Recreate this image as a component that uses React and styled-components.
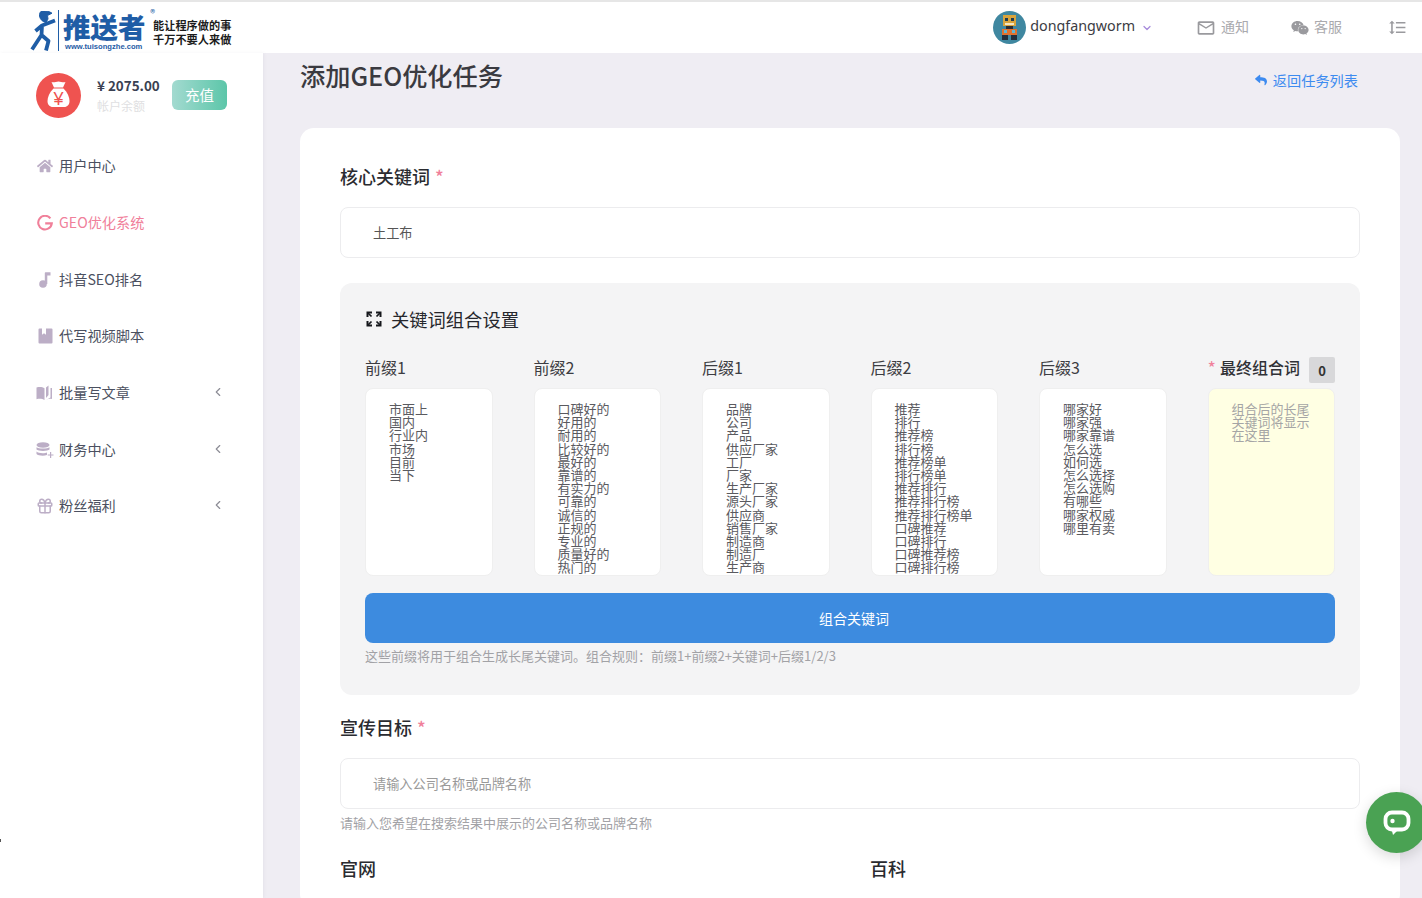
import React from "react";
import styled, { createGlobalStyle } from "styled-components";
import { ChevronLeft, ChevronDown, Gift } from "lucide-react";
import { FaHome, FaReply, FaWeixin } from "react-icons/fa";
import { MdFormatLineSpacing, MdMailOutline } from "react-icons/md";

const GlobalStyle = createGlobalStyle`
  html, body {
    margin: 0;
    height: 100%;
    overflow: hidden;
    background: #efedf3;
    font-family: "Noto Sans CJK SC", "Noto Sans", sans-serif;
  }
  * { box-sizing: border-box; }
`;

const columns = [
  { title: "前缀1", words: ["市面上", "国内", "行业内", "市场", "目前", "当下"] },
  { title: "前缀2", words: ["口碑好的", "好用的", "耐用的", "比较好的", "最好的", "靠谱的", "有实力的", "可靠的", "诚信的", "正规的", "专业的", "质量好的", "热门的", "知名的"] },
  { title: "后缀1", words: ["品牌", "公司", "产品", "供应厂家", "工厂", "厂家", "生产厂家", "源头厂家", "供应商", "销售厂家", "制造商", "制造厂", "生产商", "批发商"] },
  { title: "后缀2", words: ["推荐", "排行", "推荐榜", "排行榜", "推荐榜单", "排行榜单", "推荐排行", "推荐排行榜", "推荐排行榜单", "口碑推荐", "口碑排行", "口碑推荐榜", "口碑排行榜", "口碑排行榜单"] },
  { title: "后缀3", words: ["哪家好", "哪家强", "哪家靠谱", "怎么选", "如何选", "怎么选择", "怎么选购", "有哪些", "哪家权威", "哪里有卖"] },
];

const DatabaseIcon = () => (
  <svg width="18" height="16" viewBox="0 0 18 16" fill="currentColor">
    <ellipse cx="7" cy="3" rx="6.5" ry="2.8" />
    <path d="M.5 5.2C2 7 12 7 13.5 5.2V7.6C12 9.4 2 9.4.5 7.6z" />
    <path d="M.5 9.6C2 11.4 9 11.6 11 10.4V13C8 14.2 2 13.8.5 12z" />
    <path d="M14 10h1.2v2.4h2.3v1.2h-2.3V16H14v-2.4h-2.3v-1.2H14z" />
  </svg>
);

const GoogleIcon = () => (
  <svg width="16" height="16" viewBox="0 0 16 16" fill="none" stroke="currentColor" strokeWidth="2.1">
    <path d="M13.4 3.4A6.8 6.8 0 1 0 14.8 8.4H8.2" />
  </svg>
);

const NoteIcon = () => (
  <svg width="15" height="16" viewBox="0 0 15 16" fill="currentColor">
    <circle cx="5" cy="12" r="3.800" />
    <path d="M6.800 12V1.200c0-.6.4-1 1-1h4.700v3.300H9.300V12z" />
  </svg>
);

const BookIcon = () => (
  <svg width="15" height="16" viewBox="0 0 15 16" fill="currentColor">
    <path d="M1.500.5H4v6.200l2-1.500 2 1.500V.5h5.500a1 1 0 0 1 1 1V14.500a1 1 0 0 1-1 1h-12a1 1 0 0 1-1-1V1.500a1 1 0 0 1 1-1z" />
  </svg>
);

const OpenBookIcon = () => (
  <svg width="18" height="16" viewBox="0 0 18 16" fill="currentColor">
    <path d="M.5 2.500c3-.8 6-.6 8 .8V15c-2-1.200-5-1.400-8-.8z" />
    <path d="M10 13V2.500l2.500-2V10z" />
    <path d="M14.500 3H16v11c-2-.4-4-.2-6 1l4.500-2.500z" />
  </svg>
);

const ExpandIcon = () => (
  <svg width="16" height="16" viewBox="0 0 16 16" fill="none" stroke="#16181d" strokeWidth="2">
    <path d="M1.500 6V1.500H6M10 1.500h4.500V6M14.500 10v4.500H10M6 14.500H1.500V10" />
    <path d="M2 2l3.500 3.500M14 2l-3.500 3.500M14 14l-3.500-3.500M2 14l3.500-3.500" strokeWidth="1.700" />
  </svg>
);

const menu = [
  { label: "用户中心", icon: <FaHome size={16} /> },
  { label: "GEO优化系统", icon: <GoogleIcon />, active: true },
  { label: "抖音SEO排名", icon: <NoteIcon /> },
  { label: "代写视频脚本", icon: <BookIcon /> },
  { label: "批量写文章", icon: <OpenBookIcon />, more: true },
  { label: "财务中心", icon: <DatabaseIcon />, more: true },
  { label: "粉丝福利", icon: <Gift size={18} />, more: true },
];

const Runner = () => (
  <svg width="26" height="40" viewBox="0 0 26 40" fill="#1f5da6" stroke="#1f5da6" strokeLinejoin="round">
    <path d="M11 .5c4-1 9 0 11 1.700L17.500 4.500 18 8l-2 3.500c-3-.5-6-3-6.500-6.500C9.300 3 10 1 11 .5z" strokeWidth="1" />
    <path d="M25 9.500L12 14.500 5.500 20M12 14.500L11.500 24 2 38.500M11.500 24L18.500 30 16 39.500" fill="none" strokeWidth="3.800" />
  </svg>
);

const Avatar = () => (
  <svg width="33" height="33" viewBox="0 0 33 33">
    <circle cx="16.500" cy="16.500" r="16.500" fill="#3f87a0" />
    <rect x="10" y="4" width="13" height="11" fill="#d9a43c" />
    <rect x="12" y="7" width="3" height="3" fill="#1f3b52" />
    <rect x="18" y="7" width="3" height="3" fill="#1f3b52" />
    <rect x="12" y="12" width="9" height="2" fill="#f2e6c4" />
    <rect x="13" y="15" width="7" height="3" fill="#2b2b33" />
    <rect x="9" y="18" width="15" height="6" fill="#e0722f" />
    <rect x="11" y="19" width="3" height="3" fill="#5fb7d4" />
    <rect x="19" y="19" width="3" height="3" fill="#5fb7d4" />
    <rect x="9" y="24" width="6" height="5" fill="#23303d" />
    <rect x="18" y="24" width="6" height="5" fill="#23303d" />
  </svg>
);

const MoneyBag = () => (
  <svg width="45" height="45" viewBox="0 0 45 45">
    <circle cx="22.500" cy="22.500" r="22.500" fill="#ef5350" />
    <path d="M15.500 9c2.500 1 4.500-.6 7-.6s4.500 1.600 7 .6l-2.500 5.500h-9z" fill="#fff" />
    <path d="M17.500 15.500h10C31.500 19.500 33.500 24 33.500 28c0 3.500-2 6-5.500 6H17c-3.500 0-5.500-2.500-5.500-6 0-4 2-8.500 6-12.500z" fill="#fff" />
    <text x="22.500" y="32" textAnchor="middle" fontSize="18" fontWeight="400" fill="#ef5350" fontFamily="Liberation Sans">¥</text>
  </svg>
);

const ChatIcon = () => (
  <svg width="28" height="26" viewBox="0 0 28 26" fill="none">
    <rect x="2.500" y="2.500" width="23" height="17" rx="6.500" stroke="#fff" strokeWidth="3.800" />
    <circle cx="9.500" cy="11" r="2.200" fill="#fff" />
    <path d="M9 21h5l-4 4z" fill="#fff" />
  </svg>
);

export default function App() {
  return (
    <>
      <GlobalStyle />
      <Page>
        <Header>
          <Logo>
            <Runner />
            <LogoDivider />
            <LogoName>
              <LogoTitle>推送者</LogoTitle>
              <LogoUrl>www.tuisongzhe.com</LogoUrl>
              <LogoMark>®</LogoMark>
            </LogoName>
            <Slogan>能让程序做的事<br />千万不要人来做</Slogan>
          </Logo>
          <HeaderRight>
            <UserBox>
              <Avatar />
              <UserName>dongfangworm</UserName>
              <ChevronDown size={12} color="#a78bdc" strokeWidth={2.5} />
            </UserBox>
            <HeaderLink><MdMailOutline size={20} /><LinkText>通知</LinkText></HeaderLink>
            <HeaderLink><FaWeixin size={18} /><LinkText>客服</LinkText></HeaderLink>
            <MdFormatLineSpacing size={19} color="#9a9a9e" />
          </HeaderRight>
        </Header>
        <Body>
          <Sidebar>
            <Balance>
              <MoneyBag />
              <BalanceText>
                <Amount>¥ 2075.00</Amount>
                <AmountLabel>帐户余额</AmountLabel>
              </BalanceText>
              <Recharge>充值</Recharge>
            </Balance>
            <Menu>
              {menu.map((item) => (
                <MenuItem key={item.label} $active={item.active}>
                  <MenuIcon $active={item.active}>{item.icon}</MenuIcon>
                  <MenuLabel>{item.label}</MenuLabel>
                  {item.more && <ChevronLeft size={14} color="#8d8d96" />}
                </MenuItem>
              ))}
            </Menu>
          </Sidebar>
          <Main>
            <TitleRow>
              <PageTitle>添加GEO优化任务</PageTitle>
              <BackLink><FaReply size={12} />返回任务列表</BackLink>
            </TitleRow>
            <Card>
              <FieldLabel>核心关键词<Star>*</Star></FieldLabel>
              <TextInput defaultValue="土工布" />
              <Panel>
                <PanelTitle><ExpandIcon />关键词组合设置</PanelTitle>
                <ColumnGrid>
                  {columns.map((col) => (
                    <Column key={col.title}>
                      <ColumnTitle>{col.title}</ColumnTitle>
                      <WordBox>{col.words.join("\n")}</WordBox>
                    </Column>
                  ))}
                  <Column>
                    <ResultTitle>
                      <Star $flush>*</Star>
                      <ResultName>最终组合词</ResultName>
                      <Count>0</Count>
                    </ResultTitle>
                    <WordBox $result>组合后的长尾关键词将显示在这里</WordBox>
                  </Column>
                </ColumnGrid>
                <CombineButton>组合关键词</CombineButton>
                <HelpText $tight>这些前缀将用于组合生成长尾关键词。组合规则：前缀1+前缀2+关键词+后缀1/2/3</HelpText>
              </Panel>
              <FieldLabel $tight>宣传目标<Star>*</Star></FieldLabel>
              <TextInput placeholder="请输入公司名称或品牌名称" />
              <HelpText>请输入您希望在搜索结果中展示的公司名称或品牌名称</HelpText>
              <TwoCols>
                <FieldLabel>官网</FieldLabel>
                <FieldLabel>百科</FieldLabel>
              </TwoCols>
            </Card>
          </Main>
        </Body>
        <ChatButton><ChatIcon /></ChatButton>
        <Speck />
      </Page>
    </>
  );
}

const Page = styled.div`
  position: relative;
  height: 898px;
  overflow: hidden;
  border-top: 2px solid #e6e6e6;
`;

const Header = styled.header`
  height: 51px;
  background: #fff;
  display: flex;
  align-items: center;
  justify-content: space-between;
  padding: 0 15px 0 30px;
`;

const Logo = styled.div`
  display: flex;
  align-items: center;
  height: 48px;
  padding-top: 6px;
`;

const LogoDivider = styled.div`
  width: 1px;
  height: 41px;
  background: #1f5da6;
  margin: 0 4px 0 2px;
`;

const LogoName = styled.div`
  position: relative;
  display: flex;
  flex-direction: column;
  color: #1f5da6;
  width: 85px;
`;

const LogoTitle = styled.div`
  font-size: 27.5px;
  line-height: 31px;
  font-weight: 900;
  white-space: nowrap;
`;

const LogoUrl = styled.div`
  margin-left: 2px;
  font-family: "Liberation Sans", sans-serif;
  font-size: 7.6px;
  line-height: 9px;
  font-weight: 700;
  white-space: nowrap;
`;

const LogoMark = styled.span`
  position: absolute;
  top: -4px;
  right: -7px;
  font-size: 10px;
  line-height: 12px;
`;

const Slogan = styled.div`
  margin: 3px 0 0 5px;
  font-size: 11.2px;
  line-height: 14px;
  font-weight: 700;
  color: #1b1b1b;
  white-space: nowrap;
`;

const HeaderRight = styled.div`
  display: flex;
  align-items: center;
`;

const UserBox = styled.div`
  display: flex;
  align-items: center;
  margin-right: 43px;
  svg:first-child { margin-right: 4px; }
  svg:last-child { margin-left: 6px; }
`;

const UserName = styled.span`
  padding-bottom: 4px;
  font-family: "Noto Sans", sans-serif;
  font-size: 14.3px;
  color: #3c3c44;
`;

const HeaderLink = styled.div`
  display: flex;
  align-items: center;
  gap: 5px;
  margin-right: 42px;
  font-size: 14px;
  color: #aaaaae;
  svg { color: #9a9a9e; }
  & + & { margin-right: 46px; }
`;

const LinkText = styled.span`
  padding-bottom: 3px;
`;

const Body = styled.div`
  display: grid;
  grid-template-columns: 263px 1fr;
`;

const Sidebar = styled.aside`
  background: #fff;
  height: 845px;
  padding-left: 36px;
  box-shadow: 1px 0 3px rgba(120, 110, 140, 0.08);
`;

const Balance = styled.div`
  display: flex;
  align-items: center;
  height: 45px;
  margin-top: 20px;
`;

const BalanceText = styled.div`
  width: 75px;
  margin: 0 0 2px 16px;
`;

const Amount = styled.div`
  font-size: 13.4px;
  line-height: 18px;
  font-weight: 700;
  color: #3a4152;
  white-space: nowrap;
`;

const AmountLabel = styled.div`
  margin-top: 4px;
  font-size: 12px;
  line-height: 16px;
  color: #dfdfe2;
`;

const Recharge = styled.button`
  width: 55px;
  height: 30px;
  margin-bottom: 2px;
  padding: 0;
  border: 0;
  border-radius: 6px;
  background: linear-gradient(90deg, #a3dad0, #5cc6a9);
  color: #fff;
  font-family: inherit;
  font-size: 14.5px;
`;

const Menu = styled.nav`
  margin-top: 19px;
  width: 189px;
`;

const MenuItem = styled.div`
  display: flex;
  align-items: center;
  height: 56.7px;
  font-size: 14.2px;
  color: ${(p) => (p.$active ? "#f0809a" : "#4b5060")};
`;

const MenuIcon = styled.span`
  display: flex;
  align-items: center;
  justify-content: center;
  width: 18px;
  margin: 2px 5px 0 0;
  color: ${(p) => (p.$active ? "#f0809a" : "#bcaec6")};
`;

const MenuLabel = styled.span`
  flex: 1;
`;

const Main = styled.main`
  padding: 0 22px 0 37px;
  min-width: 0;
`;

const TitleRow = styled.div`
  display: flex;
  align-items: center;
  justify-content: space-between;
  height: 48px;
  margin-bottom: 27px;
  padding-right: 42px;
`;

const PageTitle = styled.h1`
  margin: 0 0 4px;
  font-size: 25.2px;
  line-height: 44px;
  font-weight: 500;
  color: #3a3a40;
`;

const BackLink = styled.a`
  display: flex;
  align-items: center;
  gap: 6px;
  padding-top: 6px;
  font-size: 14.2px;
  color: #3d8bf0;
`;

const Card = styled.section`
  background: #fff;
  border-radius: 14px;
  padding: 35px 40px 0;
  height: 780px;
`;

const FieldLabel = styled.div`
  margin: ${(p) => (p.$tight ? "19px" : "0")} 0 18px;
  font-size: 18px;
  line-height: 26px;
  font-weight: 500;
  color: #2a2b30;
`;

const Star = styled.span`
  margin-left: ${(p) => (p.$flush ? "0" : "5px")};
  color: #f0809a;
  font-size: 18px;
`;

const TextInput = styled.input`
  display: block;
  width: 100%;
  height: 51px;
  padding: 0 32px;
  background: #fff;
  border: 1px solid #ececee;
  border-radius: 8px;
  outline: none;
  font-family: inherit;
  font-size: 13.2px;
  color: #555;
  &::placeholder { color: #999; }
`;

const Panel = styled.div`
  margin-top: 25px;
  background: #f4f4f5;
  border-radius: 12px;
  height: 412px;
  padding: 23px 25px;
`;

const PanelTitle = styled.div`
  display: flex;
  align-items: center;
  gap: 9px;
  padding-left: 1px;
  font-size: 18.3px;
  line-height: 26px;
  color: #26272c;
`;

const ColumnGrid = styled.div`
  display: grid;
  grid-template-columns: repeat(6, 127.5px);
  justify-content: space-between;
  margin-top: 26px;
`;

const Column = styled.div`
  display: flex;
  flex-direction: column;
`;

const ColumnTitle = styled.div`
  height: 30px;
  font-size: 16px;
  line-height: 18px;
  color: #3d3d42;
`;

const ResultTitle = styled.div`
  display: flex;
  align-items: flex-start;
  height: 30px;
  line-height: 18px;
`;

const ResultName = styled.span`
  margin-left: 4px;
  font-size: 16px;
  font-weight: 500;
  color: #303136;
`;

const Count = styled.span`
  margin: -1px 0 0 auto;
  width: 26px;
  height: 26px;
  background: #d8d8da;
  border-radius: 2px;
  font-size: 13px;
  line-height: 28px;
  text-align: center;
  font-weight: 600;
  color: #333;
`;

const WordBox = styled.div`
  height: 188px;
  padding: 13px 23px 0;
  overflow: clip;
  white-space: pre-line;
  border: 1px solid #efefef;
  border-radius: 8px;
  background: ${(p) => (p.$result ? "#ffffe3" : "#fff")};
  font-size: 13px;
  line-height: 13.2px;
  color: ${(p) => (p.$result ? "#a5a5a5" : "#5a5a5f")};
`;

const CombineButton = styled.button`
  display: block;
  width: 100%;
  height: 50px;
  margin-top: 17px;
  padding: 0 0 0 8px;
  border: 0;
  border-radius: 8px;
  background: #3d8bdf;
  color: #fff;
  font-family: inherit;
  font-size: 14px;
`;

const HelpText = styled.div`
  margin-top: ${(p) => (p.$tight ? "4px" : "5px")};
  font-size: 13px;
  line-height: 18px;
  color: #a2a2a6;
`;

const TwoCols = styled.div`
  display: grid;
  grid-template-columns: 1fr 1fr;
  column-gap: 40px;
  margin-top: 23px;
`;

const ChatButton = styled.div`
  position: absolute;
  left: 1366px;
  top: 790px;
  width: 61px;
  height: 61px;
  border-radius: 50%;
  background: #4aa253;
  box-shadow: 0 4px 14px rgba(0, 0, 0, 0.15);
  display: flex;
  align-items: center;
  justify-content: center;
`;

const Speck = styled.div`
  position: absolute;
  left: 0;
  top: 837px;
  width: 1px;
  height: 3px;
  background: #555;
`;
